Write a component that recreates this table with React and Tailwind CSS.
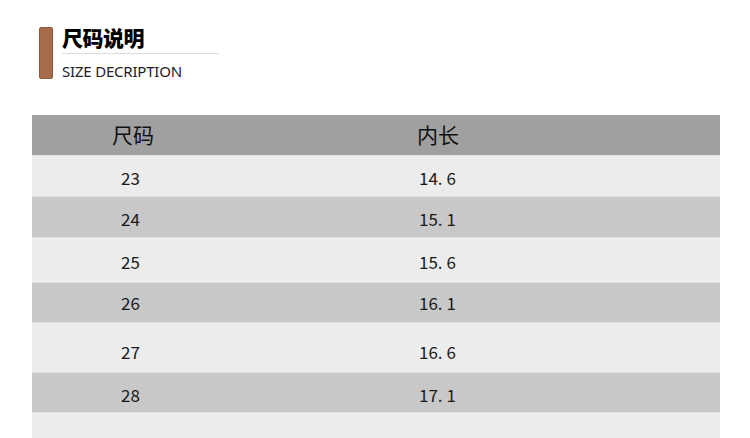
import React from "react";

const rows = [
  { s: "23", v: "14. 6", h: "h-[41px]", pt: "pt-[3px]", bg: "bg-[#ececec]" },
  { s: "24", v: "15. 1", h: "h-[41px]", pt: "pt-[3px]", bg: "bg-[#c8c8c8]" },
  { s: "25", v: "15. 6", h: "h-[45px]", pt: "pt-[4px]", bg: "bg-[#ececec]" },
  { s: "26", v: "16. 1", h: "h-[40px]", pt: "pt-0", bg: "bg-[#c8c8c8]" },
  { s: "27", v: "16. 6", h: "h-[50px]", pt: "pt-[8px]", bg: "bg-[#ececec]" },
  { s: "28", v: "17. 1", h: "h-[40px]", pt: "pt-[5px]", bg: "bg-[#c8c8c8]" },
];

export default function App() {
  return (
    <div
      className="w-[750px] h-[438px] bg-white overflow-hidden"
      style={{ fontFamily: '"Noto Sans", "Noto Sans CJK SC", sans-serif' }}
    >
      <div className="flex pt-[27px] pl-[39px]">
        <div className="w-[14px] h-[52px] rounded-[2px] bg-[#a66b4b] border border-[#8f5a3d]" />
        <div className="ml-[9px] flex flex-col">
          <div
            className="text-[21px] leading-[21px] font-black text-black tracking-[-0.5px]"
            style={{ fontFamily: '"Noto Sans CJK SC", sans-serif' }}
          >
            尺码说明
          </div>
          <div className="mt-[5px] w-[157px] h-px bg-[#dcdcdc]" />
          <div className="mt-[8px] text-[15px] leading-[18px] text-[#222] tracking-[-0.2px]">SIZE DECRIPTION</div>
        </div>
      </div>

      <div
        className="mt-[35px] ml-[32px] w-[688px] text-[#1a1a1a]"
        style={{ fontFamily: '"Noto Sans CJK SC", sans-serif' }}
      >
        <div className="h-[40px] bg-[#a0a0a0] flex items-center text-[21px] text-[#111]">
          <div className="pl-[80px] w-[385px]">尺码</div>
          <div>内长</div>
        </div>
        {rows.map((r) => (
          <div
            key={r.s}
            className={`${r.h} ${r.pt} ${r.bg} border-t border-[#e2e2e2] flex items-center text-[17px]`}
          >
            <div className="pl-[89px] w-[387px]">{r.s}</div>
            <div>{r.v}</div>
          </div>
        ))}
        <div className="h-[30px] bg-[#ececec] border-t border-[#e2e2e2]" />
      </div>
    </div>
  );
}
